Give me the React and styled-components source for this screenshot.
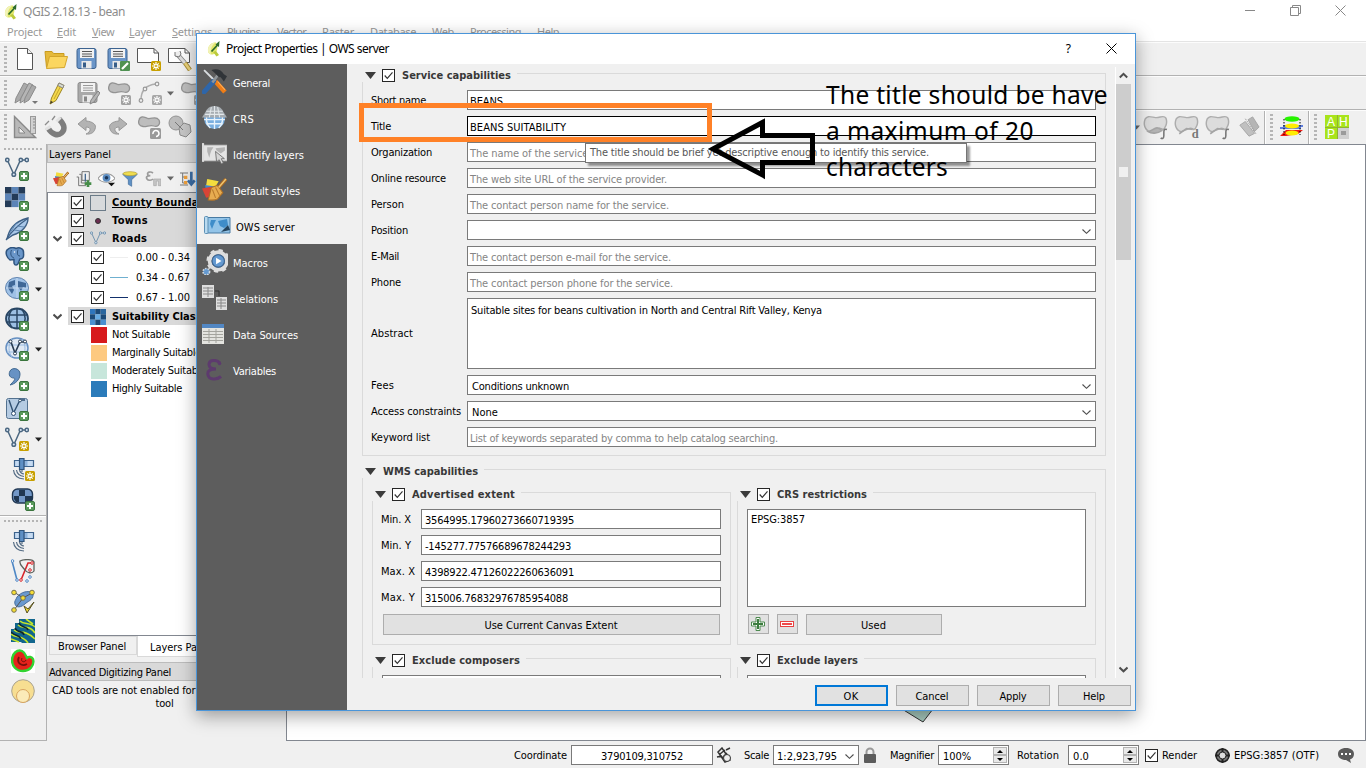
import React, { useLayoutEffect, useRef } from "react";
import styled, { createGlobalStyle } from "styled-components";

const UI = `"DejaVu Sans Condensed", "DejaVu Sans", sans-serif`;
const SEGOE = `"Noto Sans", "Open Sans", sans-serif`;

const Global = createGlobalStyle`
  *, *::before, *::after { box-sizing: border-box; }
  html, body { margin: 0; padding: 0; overflow: hidden; }
  body { font-family: ${UI}; font-stretch: condensed; font-size: 11px; line-height: 14px; color: #000; }
  svg { display: block; flex: none; }
`;

/* ---------- text ---------- */
const Span = styled.span`
  white-space: pre;
  display: inline-block;
  flex: none;
  justify-self: start;
`;

/* Spreads a label over the width given in w by letter spacing. */
function Label({ w, children, ...rest }) {
  const ref = useRef(null);
  useLayoutEffect(() => {
    const el = ref.current;
    if (!w || !el) return;
    el.style.letterSpacing = "0px";
    const natural = el.getBoundingClientRect().width;
    const count = el.textContent.length;
    el.style.letterSpacing = `${(w - natural) / count}px`;
  }, [w, children]);
  return <Span ref={ref} {...rest}>{children}</Span>;
}

/* ---------- frame ---------- */
const Screen = styled.div`
  position: relative;
  width: 1366px;
  height: 768px;
  overflow: hidden;
  background: #f0f0f0;
  display: flex;
  flex-direction: column;
`;
const TitleBar = styled.div`
  height: 23px;
  background: #fff;
  display: flex;
  align-items: center;
  padding-left: 3px;
  gap: 4px;
  color: #8c8c8c;
  font: 12px/16px ${SEGOE};
`;
const WindowButtons = styled.div`
  margin-left: auto;
  padding: 0 20px 2px 0;
  display: flex;
  gap: 34px;
  align-items: center;
`;
const MenuBar = styled.div`
  height: 19px;
  background: #fff;
  border-bottom: 1px solid #e4e4e4;
  display: flex;
  padding: 1px 0 0 7px;
  color: #989898;
  font: 11px/16px ${SEGOE};
`;
const MenuItem = styled.div`
  width: ${(p) => p.$slot}px;
  flex: none;
`;
const ToolRow = styled.div`
  height: ${(p) => p.$h || 34}px;
  flex: none;
  display: flex;
  align-items: center;
  border-bottom: ${(p) => (p.$last ? "0" : "1px solid #b2b2b2")};
  border-top: 1px solid #fcfcfc;
  padding-bottom: ${(p) => p.$pb || 0}px;
`;
const Handle = styled.div`
  width: 3px;
  height: 26px;
  margin: 0 ${(p) => p.$right || 8}px 0 4px;
  background: repeating-linear-gradient(to bottom, #b5b5b5 0 2px, transparent 2px 4px);
  flex: none;
`;
const ToolSlot = styled.div`
  width: ${(p) => p.$w || 31}px;
  height: 28px;
  flex: none;
  display: flex;
  align-items: center;
  justify-content: center;
`;
const Spacer = styled.div`flex: 1;`;
const ToolSplit = styled.div`
  width: 2px;
  height: 33px;
  border-left: 1px solid #b2b2b2;
  background: #fff;
`;

const Main = styled.div`
  height: 597px;
  flex: none;
  display: flex;
`;
const SideTools = styled.div`
  width: 47px;
  border-right: 1px solid #b2b2b2;
  border-bottom: 1px solid #b2b2b2;
  display: flex;
  flex-direction: column;
`;
const SideGrip = styled.div`
  width: 40px;
  height: 2px;
  margin: ${(p) => p.$m};
  flex: none;
  background: repeating-linear-gradient(to right, #b5b5b5 0 2px, transparent 2px 4px);
`;
const SideSlot = styled.div`
  height: 30px;
  flex: none;
  display: flex;
  align-items: center;
  padding-left: ${(p) => (p.$deep ? 11 : 5)}px;
  gap: 6px;
`;
const SideRule = styled.div`
  height: 2px;
  margin-top: 1px;
  flex: none;
  border-top: 1px solid #b2b2b2;
  background: #fff;
`;
const Dock = styled.div`
  width: 239px;
  display: flex;
  flex-direction: column;
`;
const DockTitle = styled.div`
  height: 19px;
  flex: none;
  border: 1px solid #bcbcbc;
  background: #d9d9d9;
  padding: 3px 0 0 1px;
`;
const DockTools = styled.div`
  height: 29px;
  flex: none;
  display: flex;
  align-items: center;
  padding: 2px 0 0 2px;
`;
const Tree = styled.div`
  height: 444px;
  width: 237px;
  flex: none;
  border: 1px solid #828790;
  background: #fff;
`;
const TreeRow = styled.div`
  height: ${(p) => p.$h || 18}px;
  display: flex;
  align-items: center;
  padding-top: 1px;
  background: ${(p) => (p.$head ? "linear-gradient(to right, #fff 20px, #d9d9d9 20px)" : "#fff")};
  font-weight: ${(p) => (p.$head ? "bold" : "normal")};
  text-decoration: ${(p) => (p.$line ? "underline" : "none")};
`;
const Expander = styled.div`
  width: ${(p) => p.$w || 23}px;
  flex: none;
  padding-left: 5px;
`;
const Symbol = styled.div`
  width: ${(p) => p.$w || 16}px;
  flex: none;
  margin: 0 ${(p) => p.$r || 6}px 0 6px;
  display: flex;
  justify-content: center;
`;
const Swatch = styled.div`
  width: 16px;
  height: 16px;
  background: ${(p) => p.$c};
  margin: 0 5px 0 43px;
`;
const Outline = styled.div`
  width: 16px;
  height: 16px;
  border: 1px solid #6b7b88;
  background: #d8dadc;
`;
const Stroke = styled.div`
  width: 18px;
  height: 1px;
  background: ${(p) => p.$c};
`;
const Tabs = styled.div`
  height: 26px;
  flex: none;
  display: flex;
  padding-left: 2px;
`;
const Tab = styled.div`
  width: ${(p) => p.$w}px;
  height: ${(p) => (p.$on ? 21 : 19)}px;
  border: 1px solid #d9d9d9;
  border-top-width: ${(p) => (p.$on ? 0 : 1)}px;
  background: ${(p) => (p.$on ? "#fff" : "#f0f0f0")};
  padding: ${(p) => (p.$on ? "5px 0 0 12px" : "3px 0 0 8px")};
`;
const CadText = styled.div`
  width: 235px;
  padding-top: 3px;
  line-height: 13px;
  display: flex;
  flex-direction: column;
  align-items: center;
`;
const Canvas = styled.div`
  flex: 1;
  background: #fff;
  border: 1px solid #828790;
  display: flex;
  align-items: flex-end;
  padding: 0 0 17px 615px;
`;

/* ---------- status bar ---------- */
const Status = styled.div`
  height: 27px;
  display: flex;
  align-items: center;
  padding: 1px 0 0 514px;
`;
const StatusLabel = styled(Label)`
  padding-top: 1px;
`;
const Gap = styled.div`
  width: ${(p) => p.$w}px;
  flex: none;
`;

/* ---------- controls ---------- */
const Field = styled.div`
  width: ${(p) => p.$w}px;
  height: ${(p) => p.$h || 20}px;
  flex: none;
  background: #fff;
  border: 1px solid ${(p) => (p.$focus ? "#000" : "#7a7a7a")};
  padding-top: ${(p) => p.$pt ?? 4}px;
  padding-left: ${(p) => p.$pl ?? 2}px;
  padding-right: ${(p) => (p.$combo ? 4 : 2)}px;
  color: ${(p) => (p.$hint ? "#858585" : "#000")};
  display: flex;
  align-items: flex-start;
  justify-content: ${(p) => (p.$center ? "center" : "flex-start")};
`;
const ComboArrow = styled.div`
  margin: 3px 0 0 auto;
`;
const CheckBox = styled.div`
  width: 13px;
  height: 13px;
  flex: none;
  border: 1px solid #262626;
  background: #fff;
`;
const Spin = styled.div`
  width: 71px;
  height: 20px;
  border: 1px solid #7a7a7a;
  background: #fff;
  display: flex;
  justify-content: space-between;
  padding: 1px 1px 1px 4px;
  line-height: 19px;
`;
const SpinKeys = styled.div`
  width: 14px;
  display: grid;
  grid-template-rows: 8px 8px;
`;
const SpinKey = styled.div`
  background: #e9e9e9;
  border: 1px solid #b4b4b4;
  display: grid;
  place-items: center;
`;
const Button = styled.div`
  width: ${(p) => p.$w}px;
  height: ${(p) => p.$h || 21}px;
  flex: none;
  background: #e1e1e1;
  border: ${(p) => (p.$primary ? "2px solid #0078d7" : "1px solid #adadad")};
  display: flex;
  align-items: center;
  justify-content: center;
  padding: ${(p) => (p.$icon ? 0 : 2)}px 1px 0 0;
`;

/* ---------- dialog ---------- */
const Dialog = styled.div`
  position: absolute;
  left: 196px;
  top: 33px;
  width: 940px;
  height: 678px;
  border: 1px solid #4a95d9;
  background: #f0f0f0;
  box-shadow: 0 5px 17px rgba(0, 0, 0, 0.36);
  display: flex;
  flex-direction: column;
`;
const DialogTitle = styled.div`
  height: 30px;
  flex: none;
  background: #fff;
  display: flex;
  align-items: center;
  padding: 0 18px 1px 9px;
  font: 12px/16px ${SEGOE};
  gap: 4px;
`;
const DialogBody = styled.div`
  flex: 1;
  display: flex;
  min-height: 0;
`;
const Pages = styled.div`
  width: 150px;
  background: #5d5d5d;
  color: #fff;
`;
const Page = styled.div`
  height: 36px;
  display: flex;
  align-items: center;
  padding: 3px 0 0 ${(p) => (p.$on ? 7 : 5)}px;
  gap: ${(p) => (p.$on ? 5 : 6)}px;
  color: ${(p) => (p.$on ? "#000" : "#fff")};
  background: ${(p) => (p.$on ? "#f0f0f0" : "transparent")};
`;
const PageIcon = styled.div`
  width: ${(p) => (p.$on ? 27 : 25)}px;
  margin-top: -4px;
`;
const Content = styled.div`
  flex: 1;
  display: flex;
  flex-direction: column;
`;
const ScrollArea = styled.div`
  height: 614px;
  display: flex;
  overflow: hidden;
`;
const Form = styled.div`
  width: 768px;
  padding: 5px 9px 0 15px;
`;
const ScrollBar = styled.div`
  width: 16px;
  margin-top: 3px;
  border-left: 1px solid #fff;
  display: flex;
  flex-direction: column;
  align-items: center;
`;
const ScrollEnd = styled.div`
  height: 17px;
  display: grid;
  place-items: center;
`;
const Thumb = styled.div`
  width: 15px;
  height: 176px;
  background: #cdcdcd;
  display: grid;
  place-items: center;
`;
const ThumbMark = styled.div`
  width: 9px;
  height: 10px;
  background: #f0f0f0;
`;
const Group = styled.section`
  width: ${(p) => p.$w}px;
  margin-top: ${(p) => p.$mt || 0}px;
`;
const GroupHead = styled.header`
  height: 13px;
  display: flex;
  align-items: center;
  padding-left: 3px;
  font-weight: bold;
  color: #383838;
`;
const HeadText = styled.div`
  padding-top: 1px;
`;
const Rule = styled.div`
  flex: 1;
  align-self: flex-end;
  height: 9px;
  margin-left: 6px;
  border: 1px solid #dadada;
  border-left: 0;
  border-bottom: 0;
`;
const GroupBody = styled.div`
  border: 1px solid #dadada;
  border-top: 0;
  height: ${(p) => p.$h}px;
  padding: ${(p) => p.$p || "8px 9px 0 8px"};
`;
const Columns = styled.div`
  display: grid;
  grid-template-columns: 359px 359px;
  column-gap: 6px;
`;
const FormRow = styled.div`
  display: grid;
  grid-template-columns: ${(p) => p.$c || 96}px auto;
  align-items: center;
  margin-bottom: 6px;
`;
const RowLabel = styled.div`
  padding-top: 1px;
`;
const ButtonRow = styled.div`
  display: flex;
  gap: 8px;
  padding-left: ${(p) => p.$pl}px;
  margin-top: 7px;
`;
const DialogButtons = styled.div`
  display: flex;
  justify-content: flex-end;
  gap: 8px;
  padding: 7px 4px 0 0;
`;

/* ---------- annotations ---------- */
const ToolTip = styled.div`
  position: absolute;
  left: 585px;
  top: 143px;
  width: 382px;
  height: 20px;
  padding: 2px 0 0 4px;
  background: #fff;
  border: 1px solid #767676;
  box-shadow: 3px 3px 2px rgba(0, 0, 0, 0.4);
  color: #575757;
`;
const Highlight = styled.div`
  position: absolute;
  left: 359px;
  top: 103px;
  width: 353px;
  height: 39px;
  border: 5px solid #ff8127;
`;
const Arrow = styled.svg`
  position: absolute;
  left: 705px;
  top: 115px;
`;
const Note = styled.div`
  position: absolute;
  left: 826px;
  top: 77px;
  display: flex;
  flex-direction: column;
  align-items: flex-start;
  font: 24.5px/36px ${SEGOE};
`;

/* ---------- small drawings ---------- */
const Tick = () => (
  <CheckBox><svg width="11" height="11"><path d="M1.7 5.5L4.3 8.3L9.5 2.4" fill="none" stroke="#333" strokeWidth="1.2" /></svg></CheckBox>
);
const Tri = () => <svg width="11" height="7"><path d="M0 0H11L5.5 7Z" fill="#3b3b3b" /></svg>;
const Down = ({ c = "#222" }) => <svg width="7" height="5"><path d="M0 .5H7L3.5 4.5Z" fill={c} /></svg>;
const Chevron = ({ up, bold }) => (
  <svg width="9" height="7"><path d={up ? "M.8 5.5L4.5 1.8L8.2 5.5" : "M.5 1.5L4.5 5.3L8.5 1.5"} fill="none" stroke="#4d4d4d" strokeWidth={bold ? 2 : 1.1} /></svg>
);
const Ico = ({ s = 24, children }) => <svg width={s} height={s} viewBox="0 0 24 24" fill="none">{children}</svg>;

const Plus = () => <g><rect x="14.5" y="14.5" width="9" height="9" rx="1.5" fill="#5b9a5d" stroke="#39743c" /><path d="M19 16V22M16 19H22" stroke="#fff" strokeWidth="2" /></g>;
const Star = ({ c = "#c8a000" }) => <g><rect x="14" y="14" width="10" height="10" rx="1.5" fill={c} /><path d="M19 15V23M15 19H23M16.3 16.3L21.7 21.7M21.7 16.3L16.3 21.7" stroke="#fff" strokeWidth="1.2" /><circle cx="19" cy="19" r="1" fill={c} /></g>;
const VLine = ({ c = "#4b6781" }) => (
  <g stroke={c} strokeWidth="1.5"><path d="M3 4.5L8.2 16M9.6 16L15 4M17.5 3H20" /><circle cx="2.3" cy="3" r="1.7" fill="#dce8f5" /><circle cx="8.8" cy="17.5" r="1.8" fill="#dce8f5" /><circle cx="15.8" cy="3" r="1.7" fill="#dce8f5" /><circle cx="21.8" cy="3" r="1.7" fill="#dce8f5" /></g>
);
const QLogo = () => (
  <svg width="16" height="16" viewBox="0 0 16 16" fill="none">
    <path d="M10 1.500C5 1 1.500 5.500 2 10C2.200 13 5 14.500 8 13C11 11.500 12 7 11 4Z" fill="#e0e66a" />
    <path d="M9.500 1.500C4.500 1.500 1.500 6 2 10C2.200 12 3.500 13 5 13.500C3.800 9.500 5.500 4.500 9.500 1.500Z" fill="#f2f3b8" />
    <path d="M7 11L10 10L13 14L10.500 15.500Z" fill="#bccb3c" />
    <path d="M5.500 10.500L12 3.500" stroke="#2b6b2c" strokeWidth="1.800" /><path d="M9.500 3.500L13.500 0L13 6Z" fill="#2b6b2c" />
  </svg>
);

/* toolbar drawings */
const PageNew = () => <Ico><path d="M4.500 1.500H14.500L19.500 6.500V22.500H4.500Z" fill="#fff" stroke="#555" /><path d="M14.500 1.500V6.500H19.500" stroke="#555" fill="#eee" /></Ico>;
const Folder = () => <Ico><path d="M2.500 20.500L1 4.500H8L9.500 6.500H20V10" fill="#e5b93a" stroke="#c99b1e" /><path d="M2.500 21.500L5.500 9.500H23.500L20.500 20.500Z" fill="#fbd660" stroke="#d3a52c" /></Ico>;
const Floppy = ({ gray, edit, pencil }) => (
  <Ico><rect x="2" y="1.500" width="19" height="20" rx="2" fill={gray ? "#a9a9a9" : "#6a95c8"} stroke={gray ? "#8b8b8b" : "#3c6390"} />
    <rect x="5" y="2" width="14" height="9" fill="#f2f2f2" /><path d="M7 4.500H17M7 7H17M7 9.300H17" stroke={gray ? "#999" : "#555"} strokeWidth="1" />
    <rect x="6.500" y="14" width="10" height="7.500" fill="#e9e9e9" /><rect x="8" y="15.500" width="3" height="5" fill={gray ? "#888" : "#365d89"} />
    {edit && <g><rect x="14" y="14" width="10" height="10" rx="1" fill="#4f9152" /><path d="M16 22L22 16" stroke="#fff" strokeWidth="2.200" /></g>}
    {pencil && <path d="M14 23L15 19L22 10L24 12L18 21Z" fill="#b5b5b5" stroke="#858585" />}
  </Ico>
);
const Composer = ({ tool }) => (
  <Ico><path d="M.5 1.500H17L21.500 6V15.500H.5Z" fill="#fff" stroke="#555" /><path d="M17 1.500V6H21.500" stroke="#555" />
    {tool ? <g><path d="M9 7L17 16" stroke="#888" strokeWidth="4.500" /><path d="M9 7L17 16" stroke="#ddd" strokeWidth="2.800" /><path d="M7 5V9L11 10L13 7L12 4" fill="#eee" stroke="#777" /><path d="M17 16L22 23" stroke="#a88c35" strokeWidth="4.500" /><path d="M17 16L22 23" stroke="#ead27a" strokeWidth="2.500" /></g> : <Star />}</Ico>
);
const Pencil = ({ gray, multi }) => (
  <Ico>{multi && <g stroke="#8b8b8b"><path d="M1 22L2 17L10 2L14 4L6 19Z" fill="#aaa" /><path d="M6 22L7 17L15 2L19 4L11 19Z" fill="#b5b5b5" /></g>}
    <path d={multi ? "M10 22L11 17L18 4L22 6L15 19Z" : "M5 23L6.500 17L14 2L19 4.500L11 19.500Z"} fill={gray ? "#aaa" : "#f4d94d"} stroke={gray ? "#8b8b8b" : "#9c8422"} />
    {!gray && <g><path d="M9 18L16.500 3.500" stroke="#c8a62a" /><path d="M14 2L19 4.500L17.700 7L12.800 4.500Z" fill="#d9dcd0" stroke="#888" /><path d="M5 23L6 20L8 21Z" fill="#333" /></g>}
    {multi && <path d="M18 20H24L21 23Z" fill="#777" />}</Ico>
);
const Blob = ({ badge = true, arrow }) => (
  <Ico><path d="M2 5C3 0 8 2 11 3.500C15 4 19 .5 22 5C24 10 20 12 17 11C13 9.500 10 12 6 11.500C2 11 1 8 2 5Z" fill="#bdbdbd" stroke="#939393" strokeWidth="1.300" />
    {badge && <Star c="#a2a2a2" />}{arrow && <g><rect x="13" y="13" width="11" height="11" rx="1.500" fill="#9a9a9a" /><path d="M16 19A3 3 0 1 1 19 21.500" stroke="#fff" strokeWidth="1.600" /></g>}</Ico>
);
const CurveNode = () => <Ico><path d="M3 19C3 10 8 4 18 3" stroke="#adadad" strokeWidth="1.500" /><g fill="#eee" stroke="#999" strokeWidth="1.200"><circle cx="3" cy="19.500" r="1.800" /><circle cx="7" cy="8" r="1.800" /><circle cx="19" cy="3" r="1.800" /></g><Star c="#a8a8a8" /></Ico>;
const SetSquare = () => <Ico><path d="M1.500 1.500V22.500H22.500Z" fill="#b8b8b8" stroke="#888" strokeWidth="1.400" /><path d="M6 12V18H12Z" fill="#f0f0f0" stroke="#888" /><rect x="17.500" y="1.500" width="5" height="17" fill="#d0d0d0" stroke="#999" /><path d="M20 4H22M20 7H22M20 10H22M20 13H22" stroke="#888" /></Ico>;
const Magnet = () => <Ico><path d="M4 13C8 20 14 21 17.500 18C22 14 20 9 15 4" stroke="#7d7d7d" strokeWidth="5.500" /><path d="M1.500 14.500L6.500 11.500M12.500 6.500L16.500 2.500" stroke="#e2e2e2" strokeWidth="3" /><path d="M1 10L5 6M8 5L11 1" stroke="#8d8d8d" strokeWidth="1.300" /></Ico>;
const Undo = ({ flip }) => <Ico><g transform={flip ? "translate(24 0) scale(-1 1)" : ""}><path d="M3 9L11 2.500V6C18 6.500 22 10 20 14C19 18 15 19.500 11 19C16 17 17 12 11 12V15.500Z" fill="#b3b3b3" stroke="#989898" /></g></Ico>;
const Simplify = () => <Ico><circle cx="8" cy="8" r="7" fill="#bcbcbc" stroke="#949494" /><path d="M11 13L16 8L22 10L23 17L18 22L12 20Z" fill="#c6c6c6" stroke="#8b8b8b" /><path d="M7 7L15 15" stroke="#777" /></Ico>;
const Scarf = ({ t, fill }) => (
  <Ico s={25}><path d="M2 4C4 0 8 2 12 2.500C16 3 20-.5 22 3C24 8 21 13 19 14C16 11 12 14 7 16C2 15 0 9 2 4Z" fill="#dcdcdc" stroke="#adadad" strokeWidth="1.400" /><path d={fill ? "M5 16C10 15 13 9 18 15C14 18 8 18 5 16Z" : "M5 18L12 13L18 14"} fill={fill ? "#b4b4b4" : "none"} stroke="#a5a5a5" strokeWidth="1.500" />
    {t ? <text x="17" y="22" fontFamily="Liberation Serif, serif" fontSize="12" fontWeight="bold" fill="#777">{t}</text> : <path d="M23 14C20 13 20 15 20 17V20C20 23 18 23 17 22" stroke="#777" strokeWidth="1.500" />}</Ico>
);
const Clips = () => <Ico s={22}><path d="M2 10L8 6L18 19L12 22Z" fill="#c0c0c0" stroke="#a3a3a3" /><path d="M11 4L16 1L23 12L18 17Z" fill="#b5b5b5" stroke="#a3a3a3" /><path d="M8 3L20 20" stroke="#999" strokeDasharray="2 1" /></Ico>;
const Stack = () => <Ico><path d="M3 11H23M0 13H21" stroke="#3159d8" strokeWidth="1.300" /><path d="M0 21L6 15H23L18 19L6 21Z" fill="#f21b13" /><ellipse cx="12" cy="18" rx="6.500" ry="2.500" fill="#ffec00" /><ellipse cx="12" cy="11" rx="7" ry="2.600" fill="#ffec00" /><ellipse cx="12" cy="4" rx="7.500" ry="2.700" fill="#27f400" /><path d="M4 4V20M20 4V20" stroke="#000" strokeDasharray="1.500 1.500" /></Ico>;
const Ahp = () => (
  <Ico><rect width="24" height="24" fill="#a8e41a" /><rect x="13" y="13" width="11" height="11" fill="#d0d0d0" /><path d="M12.500 0V24M0 12.500H24" stroke="#8fb431" /><rect x="16" y="16" width="5" height="4" fill="#9b9b9b" />
    <g fontFamily="Liberation Sans, sans-serif" fontSize="12" fill="#fff"><text x="2" y="10.500">A</text><text x="14" y="10.500">H</text><text x="2" y="22.500">P</text></g></Ico>
);

/* layer panel drawings */
const Brush = ({ s = 16 }) => <Ico s={s}><path d="M3 8L12 5L12 17L4 17Z" fill="#3e87cf" /><path d="M5 2L16 4L13 9L4 8Z" fill="#f4dd3e" /><path d="M0 11L10 9L11 18L4 20Z" fill="#d94436" /><path d="M9 10L15 8L20 15L15 21C12 23 9 22 6 22Z" fill="#e7ac50" stroke="#ad7026" /><path d="M16 10L23 2" stroke="#a76722" strokeWidth="3.500" /><path d="M16 10L23 2" stroke="#efc36e" strokeWidth="1.500" /><path d="M10 12L13 20M13 10L17 18" stroke="#b97a2c" /></Ico>;
const Copies = () => <Ico s={16}><path d="M1 9H4V22H15M5 5H8V18H19M9 1H20V14H9Z" stroke="#777" strokeWidth="1.500" /><path d="M14 4V16" stroke="#476a90" strokeWidth="2" /><path d="M18 14V24M13 19H23" stroke="#468d49" strokeWidth="4" /></Ico>;
const Eye = () => <Ico s={17}><path d="M0 12C6 3 18 3 24 12C18 19 6 19 0 12Z" fill="#fff" stroke="#999" strokeWidth="1.500" /><circle cx="12" cy="11" r="5.500" fill="#5b8cc1" /><circle cx="12" cy="11" r="2.500" fill="#1c3557" /><path d="M14 18H24L19 23Z" fill="#111" /></Ico>;
const Funnel = () => <Ico s={16}><path d="M1 5C4 2 20 2 23 5L14.500 13V23L9.500 20V13Z" fill="#5f91c5" stroke="#3a689a" /><ellipse cx="12" cy="4" rx="10.500" ry="3" fill="#efdc4e" stroke="#b7a02f" /></Ico>;
const EpsFilter = () => <Ico s={16}><path d="M12 3C8 0 3 2 4 5C4 7 8 7 8 7C3 7 1 9 3 12C5 15 10 14 12 12" stroke="#9b9b9b" strokeWidth="2.500" /><path d="M13 12H24V22H20V15H17V22H13Z" fill="#c6c6c6" stroke="#a5a5a5" /></Ico>;
const ExpandAll = () => <Ico s={16}><path d="M0 3H12M4 3V18H9M4 9H9M0 21H12" stroke="#777" strokeWidth="1.500" /><path d="M6 7H11V12H6ZM6 15H11V20H6Z" fill="#f0a03c" /><path d="M17 1V19M12 14L17 20L22 14" stroke="#3c6fa8" strokeWidth="4" /></Ico>;
const darkTiles = ["#243b57", "#5c84b7", "#243b57", "#5c84b7", "#243b57", "#5c84b7", "#243b57", "#5c84b7", "#7ba3d3"];
const lightTiles = ["#2f76bd", "#1c4a78", "#2a669e", "#1c4a78", "#65abe4", "#1c4a78", "#4a8fd0", "#1c4a78", "#4a8fd0"];
const Raster = ({ s = 24, badge, light }) => {
  const u = light ? 8 : 6.7;
  return (
    <Ico s={s}>{(light ? lightTiles : darkTiles).map((c, i) => <rect key={i} x={(i % 3) * u} y={Math.floor(i / 3) * u} width={u} height={u} fill={c} />)}{badge && <Plus />}</Ico>
  );
};

/* data source drawings */
const AddVector = () => <Ico><VLine /><Plus /></Ico>;
const Feather = () => <Ico><path d="M2 22C4 13 8 5 23 1C23 8 18 15 8 18Z" fill="#a9c7e8" stroke="#3d5f85" strokeWidth="1.400" /><path d="M1 23C6 15 13 8 22 2" stroke="#3d5f85" strokeWidth="1.200" /><path d="M5 16L12 5M9 13L16 14M12 9L19 10" stroke="#5f87b2" /><Plus /></Ico>;
const Elephant = () => <Ico><path d="M2 3C5 0 9 .5 11 1.500C14 0 19 1 18.500 6C19 10 18 12 15 12C13.500 14 14 18 11 18C8.500 18 9 15 9 12.500L5 13C2 11 0 6 2 3Z" fill="#6a96c9" stroke="#2f547f" strokeWidth="1.500" /><path d="M6.500 3C5 7 6 10 9 11M13 2.500C12 6 12 9 15 9" stroke="#2f547f" /><circle cx="9.500" cy="5" r=".8" fill="#fff" /><Plus /></Ico>;
const GlobeLand = () => <Ico><ellipse cx="12" cy="11" rx="11.500" ry="10.500" fill="#9fc1e6" stroke="#6285b0" /><path d="M4 5L10 3L10 8L7 9L9 13L7 17L3 11ZM13 4L21 6L21 11L18 10L16 14L13 10Z" fill="#3f6797" /><path d="M1 11H23M12 1V21" stroke="#cfe0f3" strokeWidth=".8" /><Plus /></Ico>;
const GlobeDark = () => <Ico><ellipse cx="12" cy="11.500" rx="11" ry="10" fill="#9cbfe3" stroke="#294664" strokeWidth="1.800" /><path d="M2 8H22M2 15H22M12 1.500V21.500M7 2C3 8 3 15 7 21M17 2C21 8 21 15 17 21" stroke="#294664" strokeWidth="1.500" /><Plus /></Ico>;
const GlobeV = () => <Ico><ellipse cx="12" cy="11" rx="11" ry="10" fill="#dfe9f4" stroke="#6690c2" strokeWidth="1.500" /><path d="M2 8H22M2 15H22M7 2C3 8 3 15 7 20M17 2C21 8 21 15 17 20" stroke="#9abbe0" /><path d="M6 5L10 16L15 5H20" stroke="#263a50" strokeWidth="1.600" /><g fill="#fff" stroke="#263a50"><circle cx="5.500" cy="4.500" r="1.500" /><circle cx="10" cy="16.500" r="1.500" /><circle cx="15" cy="4.500" r="1.500" /><circle cx="20" cy="4.500" r="1.500" /></g><Plus /></Ico>;
const Comma = () => <Ico><path d="M5 4C7 0 15 1 15 7C15 13 10 17 5 18C9 14 11 12 9 11C5 11 3 8 5 4Z" fill="#6792c4" stroke="#41688f" /><Plus /></Ico>;
const VBox = () => <Ico><rect x="1.500" y="1.500" width="21" height="20" rx="2" fill="#b5cbe2" stroke="#53718f" /><path d="M4 3L8.500 16L15 3H20" stroke="#2f4f70" strokeWidth="1.400" /><g fill="#fff" stroke="#2f4f70"><circle cx="8.500" cy="16.500" r="2" /><circle cx="15" cy="3.500" r="1.400" /></g><Plus /></Ico>;
const NewV = () => <Ico><VLine /><Star /></Ico>;
const Sat = ({ star }) => <Ico><path d="M3.500 3.500H9V9.500H3.500ZM13 3.500H22.500V9.500H13Z" fill="#c6dbf2" stroke="#3d638d" strokeWidth="1.200" /><path d="M15 4V9" stroke="#8fb4de" strokeWidth="3" /><path d="M8.500 1.500H13V12.500H8.500Z" fill="#5e8fc4" stroke="#2f547c" strokeWidth="1.200" /><path d="M11 13V15M2.500 13C3 19 7 21.500 13 22M5.500 13C6 17 9 19 13 19.500M8.500 13C9 15 10 16.500 13 17" stroke="#566d85" strokeWidth="1.200" />{star && <Star />}</Ico>;
const DbTile = () => <Ico><rect x="1.500" y="2" width="20" height="14" rx="5" fill="#7398c8" stroke="#203752" strokeWidth="1.400" /><path d="M8 3H14V9H8ZM3 9H8V15H5L3 12ZM14 9H21V13L18 15H14Z" fill="#203752" /><Plus /></Ico>;
const Topo = () => <Ico><path d="M1 2L6 21" stroke="#4e87c5" strokeWidth="1.600" /><path d="M10 21L17 4H22" stroke="#d9262b" strokeWidth="1.600" /><path d="M9 2C13 0 22 0 23 3V12C21 15 16 14 14 11C12 8 8 6 9 2Z" stroke="#5d625e" strokeWidth="1.300" /><g fill="#fff"><circle cx="1.500" cy="2" r="1.300" stroke="#4e87c5" /><circle cx="6" cy="21" r="1.300" stroke="#4e87c5" /><circle cx="16" cy="22" r="1.300" stroke="#4e87c5" /><circle cx="19" cy="18" r="1.300" stroke="#4e87c5" /><circle cx="10" cy="21" r="1.300" stroke="#d9262b" /><circle cx="19" cy="11" r="1.300" stroke="#d9262b" /><circle cx="21" cy="4" r="1.300" stroke="#d9262b" /></g></Ico>;
const CheckGeom = () => <Ico><path d="M6 8C10 3 17 1 22 4C23 10 18 12 15 14C10 19 5 19 4 15C3 12 5 11 6 8Z" fill="#6a99cf" stroke="#496f9d" /><path d="M3 3L12 9L3 21M12 9L21 4" stroke="#555" /><g fill="#f5dd35" stroke="#77724c"><circle cx="3" cy="3.500" r="2.300" /><circle cx="21" cy="3.500" r="2.300" /><circle cx="12" cy="9" r="2.300" /><circle cx="3" cy="21" r="2.300" /></g><path d="M13 17L17 20L23 13L16 24Z" fill="#f5dd35" stroke="#554f21" /></Ico>;
const Terrain = () => <Ico><path d="M8 0H24V24H10L11 23H0V10H4V4H8Z" fill="#12668d" /><path d="M9 2C13 6 19 3 24 8M7 6C12 11 18 5 24 14M3 11C8 16 13 9 24 20M0 15C5 20 11 15 17 24M0 20L8 23M15 0L22 5" stroke="#c5e52a" strokeWidth="1.600" /><path d="M8 4C10 9 16 7 17 11M4 9C7 15 12 11 13 16M0 13C5 18 8 15 10 20" stroke="#0e2630" strokeWidth="1.600" /></Ico>;
const Heat = () => <Ico><rect width="24" height="24" fill="#fff" /><path d="M11 2C15 4 15 8 16 9C18 7 21 8 22 10C24 17 18 22 12 22C5 22 1 17 1 11C1 5 6 0 11 2Z" fill="#e5231b" stroke="#31d431" strokeWidth="2.400" /><path d="M8 8C5 14 11 18 16 15" stroke="#75100c" strokeWidth="1.800" /><path d="M11 9C9 13 14 14 15 11" stroke="#75100c" /></Ico>;
const Rings = () => <Ico><circle cx="12" cy="12" r="11.300" fill="#f7de91" stroke="#a8a392" /><circle cx="12" cy="17" r="6.500" fill="#fbebb8" stroke="#d9a45e" /></Ico>;

/* dialog page drawings */
const Tools = () => <Ico s={25}><path d="M2 1L13 12" stroke="#d9dde0" strokeWidth="1.800" /><path d="M13 12L22 22" stroke="#ef7d16" strokeWidth="4.400" /><path d="M15 12L22 20" stroke="#ffae58" /><path d="M2 22L11 12" stroke="#2e66aa" strokeWidth="4.800" strokeLinecap="round" /><path d="M10 13L15 6" stroke="#8f9599" strokeWidth="2.500" /><path d="M9 1C14-1 19 1 21 5L24 7L21 12L18 8C15 8 15 6 9 1Z" fill="#303438" /></Ico>;
const CrsGlobe = () => <Ico s={25}><circle cx="12" cy="13" r="10" fill="#7aafe0" /><path d="M2 14H22M12 4V23M6 5C3 12 4 19 8 22M18 5C21 12 20 19 16 22M4 18H20" stroke="#e8f3fc" strokeWidth="1.300" /><path d="M0 12L5 4C8 0 16 0 19 4L24 12Z" fill="#a6acb1" /><path d="M3 9H21M4 6H20M9 2L7 12M15 2L17 12M12 1V12" stroke="#e3e8eb" /></Ico>;
const IdMap = () => <Ico s={25}><path d="M1 4H24V19H1Z" fill="#e4e4e4" stroke="#c5c5c5" /><path d="M1 2V20" stroke="#ddd" strokeWidth="2" /><path d="M5 6L11 6L9 9L8 12L7 16L5 10ZM13 7L22 6L22 9L18 12L14 9Z" fill="#b4b4b4" /><path d="M13 10L14 20L16.500 18L18.500 22L20.500 21L18.500 17H21.500Z" fill="#d6d6d6" stroke="#666" strokeWidth=".8" /></Ico>;
const OwsMap = () => <svg width="27" height="19" fill="none"><path d="M1 1.500H26V17H2Z" fill="#93c4e8" stroke="#487ba3" /><rect x=".5" y=".5" width="3.500" height="17" rx="1" fill="#b9daf0" stroke="#5d90b5" /><path d="M7 4L12 4L10 8L8 13L6 8ZM14 5L23 3L24 9L20 12L16 10Z" fill="#3f8dc9" /><path d="M24 9L26 14L17 16Z" fill="#24445e" /></svg>;
const Gears = () => <Ico s={26}><circle cx="15" cy="11" r="8" stroke="#dedede" strokeWidth="3.500" /><circle cx="15" cy="11" r="9.700" stroke="#dedede" strokeWidth="2.500" strokeDasharray="3.800 3.820" /><circle cx="15" cy="11" r="5.700" fill="#6499d0" stroke="#3c6898" /><path d="M13 8L18 11L13 14Z" fill="#fff" /><circle cx="4" cy="21" r="3" fill="#6499d0" stroke="#d2d7db" strokeWidth="1.500" strokeDasharray="1.500 1" /></Ico>;
const Relation = () => <svg width="26" height="26"><g fill="#dedede"><rect width="12" height="13" /><rect x="14" y="12" width="11" height="13" /></g><path d="M1 3H11M1 6H11M1 9H11M6 2V12M15 15H24M15 18H24M15 21H24M19 13V24" stroke="#888" fill="none" /><path d="M13 6H17V11" stroke="#333" fill="none" /></svg>;
const Table = () => <svg width="23" height="20"><rect width="22" height="20" fill="#e4e4e0" /><rect width="22" height="4" fill="#5287c3" /><path d="M1 7.500H21M1 10.500H21M1 13.500H21M1 16.500H21M7 5V19M14 5V19" stroke="#a4a49e" fill="none" /></svg>;
const Epsilon = () => <svg width="25" height="22" fill="none"><path d="M18 4C14 0 7 1 7 5.500C7 9 11 10 14 10C8 10 5 12 6 16C7 21 15 21 19 17.500" stroke="#5d3a6e" strokeWidth="3" /><circle cx="17.500" cy="4.500" r="1.800" fill="#5d3a6e" /></svg>;

const leftIcons = [[AddVector], [() => <Raster badge />], [Feather], [Elephant, 1], [GlobeLand, 1], [GlobeDark], [GlobeV, 1], [Comma], [VBox], [NewV, 1], [() => <Sat star />, 0, 1], [DbTile, 0, 1]];
const lowerIcons = [Sat, Topo, CheckGeom, Terrain, Heat, Rings];
const menus = [["Project", 35, 50, 3], ["Edit", 19, 35, 0], ["View", 22, 37, 0], ["Layer", 27, 43, 0], ["Settings", 40, 55, 0], ["Plugins", 33, 50, 0], ["Vector", 29, 45, 4], ["Raster", 32, 48, 0], ["Database", 46, 62, 0], ["Web", 22, 38, 0], ["Processing", 51, 67, 3], ["Help", 22, 22, 0]];
const pages = [["General", 37, Tools], ["CRS", 21, CrsGlobe], ["Identify layers", 71, IdMap], ["Default styles", 67, () => <Brush s={25} />], ["OWS server", 59, OwsMap], ["Macros", 35, Gears], ["Relations", 45, Relation], ["Data Sources", 65, Table], ["Variables", 43, Epsilon]];
const serviceRows = [
  ["Short name", 55, "BEANS", 33], ["Title", 20, "BEANS SUITABILITY", 96, "focus"],
  ["Organization", 61, "The name of the service provider.", 164, "hint"],
  ["Online resource", 75, "The web site URL of the service provider.", 197, "hint"],
  ["Person", 33, "The contact person name for the service.", 199, "hint"],
  ["Position", 37, "", 0, "combo"],
  ["E-Mail", 28, "The contact person e-mail for the service.", 201, "hint"],
  ["Phone", 30, "The contact person phone for the service.", 203, "hint"],
  ["Abstract", 42, "Suitable sites for beans cultivation in North and Central Rift Valley, Kenya", 351, "area"],
  ["Fees", 23, "Conditions unknown", 97, "combo"],
  ["Access constraints", 90, "None", 26, "combo"],
  ["Keyword list", 59, "List of keywords separated by comma to help catalog searching.", 308, "hint"],
];
const extent = [["Min. X", 30, "3564995.17960273660719395", 149], ["Min. Y", 30, "-145277.77576689678244293", 146], ["Max. X", 34, "4398922.47126022260636091", 149], ["Max. Y", 34, "315006.76832976785954088", 143]];

function Head({ title, w, check = true }) {
  return (
    <GroupHead>
      <Tri /><Gap $w={check ? 6 : 7} />{check && <Tick />}{check && <Gap $w={7} />}
      <HeadText><Label w={w}>{title}</Label></HeadText><Rule />
    </GroupHead>
  );
}
const SpinBox = ({ text, w }) => (
  <Spin><Label w={w}>{text}</Label><SpinKeys><SpinKey><svg width="6" height="3"><path d="M0 3H6L3 0Z" /></svg></SpinKey><SpinKey><svg width="6" height="3"><path d="M0 0H6L3 3Z" /></svg></SpinKey></SpinKeys></Spin>
);

function PropertiesDialog() {
  return (
    <Dialog>
      <DialogTitle>
        <QLogo /><Label w={163}>Project Properties | OWS server</Label><Spacer />
        <Label>?</Label><Gap $w={27} />
        <svg width="11" height="11"><path d="M.5 .5L10.500 10.500M10.500 .5L.5 10.500" stroke="#000" /></svg>
      </DialogTitle>
      <DialogBody>
        <Pages>
          {pages.map(([name, w, Icon]) => {
            const on = name === "OWS server";
            return <Page key={name} $on={on}><PageIcon $on={on}><Icon /></PageIcon><Label w={w}>{name}</Label></Page>;
          })}
        </Pages>
        <Content>
          <ScrollArea>
            <Form>
              <Group $w={744}>
                <Head title="Service capabilities" w={109} />
                <GroupBody $h={374}>
                  {serviceRows.map(([name, w, value, vw, kind]) => (
                    <FormRow key={name}>
                      <RowLabel><Label w={w}>{name}</Label></RowLabel>
                      <Field $w={629} $h={kind === "area" ? 71 : 0} $pt={kind === "area" ? 5 : 4} $pl={kind === "combo" ? 4 : kind === "area" ? 3 : 2} $focus={kind === "focus"} $hint={kind === "hint"} $combo={kind === "combo"}>
                        {value && <Label w={vw}>{value}</Label>}{kind === "combo" && <ComboArrow><Chevron /></ComboArrow>}
                      </Field>
                    </FormRow>
                  ))}
                </GroupBody>
              </Group>
              <Group $w={744} $mt={9}>
                <Head title="WMS capabilities" w={95} check={false} />
                <GroupBody $h={210} $p="10px 9px 0 9px">
                  <Columns>
                    <Group $w={359}>
                      <Head title="Advertised extent" w={103} />
                      <GroupBody $h={144}>
                        {extent.map(([n, w, v, vw]) => <FormRow key={n} $c={40}><RowLabel><Label w={w}>{n}</Label></RowLabel><Field $w={300} $pl={3}><Label w={vw}>{v}</Label></Field></FormRow>)}
                        <ButtonRow $pl={2}><Button $w={337}><Label w={133}>Use Current Canvas Extent</Label></Button></ButtonRow>
                      </GroupBody>
                    </Group>
                    <Group $w={359}>
                      <Head title="CRS restrictions" w={90} />
                      <GroupBody $h={144} $p="8px 9px 0 9px">
                        <Field $w={339} $h={98} $pt={3} $pl={3}><Label w={54}>EPSG:3857</Label></Field>
                        <ButtonRow $pl={1}>
                          <Button $icon $w={21} $h={20}><svg width="14" height="14"><path d="M5 .5H9V5H13.500V9H9V13.500H5V9H.5V5H5Z" fill="#fff" stroke="#4c8a4f" /><path d="M7 2V12M2 7H12" stroke="#3c7d3f" strokeWidth="2" /></svg></Button>
                          <Button $icon $w={21} $h={20}><svg width="14" height="6"><rect x=".5" y=".5" width="13" height="5" fill="#fff" stroke="#e84242" /><path d="M2 3H12" stroke="#ef4b4b" strokeWidth="2" /></svg></Button>
                          <Button $w={136}><Label w={25}>Used</Label></Button>
                        </ButtonRow>
                      </GroupBody>
                    </Group>
                    <Group $w={359} $mt={9}><Head title="Exclude composers" w={108} /><GroupBody $h={40} $p="8px 9px 0 9px"><Field $w={339} $h={30} /></GroupBody></Group>
                    <Group $w={359} $mt={9}><Head title="Exclude layers" w={81} /><GroupBody $h={40} $p="8px 9px 0 9px"><Field $w={339} $h={30} /></GroupBody></Group>
                  </Columns>
                </GroupBody>
              </Group>
            </Form>
            <ScrollBar>
              <ScrollEnd><Chevron up bold /></ScrollEnd>
              <Thumb><ThumbMark /></Thumb><Spacer />
              <ScrollEnd><Chevron bold /></ScrollEnd>
            </ScrollBar>
          </ScrollArea>
          <DialogButtons>
            <Button $w={73} $primary><Label w={15}>OK</Label></Button>
            <Button $w={73}><Label w={33}>Cancel</Label></Button>
            <Button $w={73}><Label w={27}>Apply</Label></Button>
            <Button $w={73}><Label w={22}>Help</Label></Button>
          </DialogButtons>
        </Content>
      </DialogBody>
    </Dialog>
  );
}

function LayersDock() {
  return (
    <Dock>
      <DockTitle><Label w={62}>Layers Panel</Label></DockTitle>
      <DockTools>
        {[Brush, Copies, Eye, Funnel, EpsFilter].map((I, i) => <ToolSlot key={i} $w={23}><I /></ToolSlot>)}
        <ToolSlot $w={12}><Down c="#666" /></ToolSlot><ToolSlot $w={24}><ExpandAll /></ToolSlot>
      </DockTools>
      <Tree>
        <TreeRow $head $line><Expander /><Tick /><Symbol><Outline /></Symbol><Label w={108}>County Boundaries</Label></TreeRow>
        <TreeRow $head><Expander /><Tick /><Symbol><svg width="6" height="6"><circle cx="3" cy="3" r="2.500" fill="#6b2d50" stroke="#333" /></svg></Symbol><Label w={36}>Towns</Label></TreeRow>
        <TreeRow $head><Expander><Chevron bold /></Expander><Tick /><Symbol><Ico s={16}><VLine c="#7495b0" /></Ico></Symbol><Label w={35}>Roads</Label></TreeRow>
        {[["0.00 - 0.34", "#eeeeee"], ["0.34 - 0.67", "#6fb0d0"], ["0.67 - 1.00", "#12306b"]].map(([t, c]) => (
          <TreeRow key={t} $h={20}><Expander $w={43} /><Tick /><Symbol $w={18} $r={8}><Stroke $c={c} /></Symbol><Label w={54}>{t}</Label></TreeRow>
        ))}
        <TreeRow $head><Expander><Chevron bold /></Expander><Tick /><Symbol><Raster s={16} light /></Symbol><Label w={102}>Suitability Classes</Label></TreeRow>
        {[["Not Suitable", "#d7191c", 58], ["Marginally Suitable", "#fdc980", 89], ["Moderately Suitable", "#c7e6db", 94], ["Highly Suitable", "#2b7bba", 70]].map(([t, c, w]) => (
          <TreeRow key={t}><Swatch $c={c} /><Label w={w}>{t}</Label></TreeRow>
        ))}
      </Tree>
      <Tabs><Tab $w={88}><Label w={68}>Browser Panel</Label></Tab><Tab $w={88} $on><Label w={62}>Layers Panel</Label></Tab></Tabs>
      <DockTitle><Label w={122}>Advanced Digitizing Panel</Label></DockTitle>
      <CadText><Label w={225}>CAD tools are not enabled for the current map</Label><Label w={18}>tool</Label></CadText>
    </Dock>
  );
}

export default function App() {
  return (
    <>
      <Global />
      <Screen>
        <TitleBar>
          <QLogo /><Label w={102}>QGIS 2.18.13 - bean</Label>
          <WindowButtons>
            <svg width="11" height="11"><path d="M0 5.500H10" stroke="#888" /></svg>
            <svg width="11" height="11" fill="none"><path d="M.5 2.500H8.500V10.500H.5ZM2.500 2.500V.5H10.500V8.500H8.500" stroke="#888" /></svg>
            <svg width="11" height="11"><path d="M.5 .5L10.500 10.500M10.500 .5L.5 10.500" stroke="#888" /></svg>
          </WindowButtons>
        </TitleBar>
        <MenuBar>
          {menus.map(([t, w, slot, k]) => <MenuItem key={t} $slot={slot}><Label w={w}>{t.slice(0, k)}<u>{t[k]}</u>{t.slice(k + 1)}</Label></MenuItem>)}
        </MenuBar>
        <ToolRow>
          <Handle $right={2} />
          {[PageNew, Folder, Floppy, () => <Floppy edit />, Composer, () => <Composer tool />].map((I, i) => <ToolSlot key={i}><I /></ToolSlot>)}
        </ToolRow>
        <ToolRow>
          <Handle $right={3} />
          {[() => <Pencil gray multi />, Pencil, () => <Floppy gray pencil />, Blob, CurveNode].map((I, i) => <ToolSlot key={i}><I /></ToolSlot>)}
          <ToolSlot $w={11}><Down c="#666" /></ToolSlot><ToolSlot><Blob /></ToolSlot>
        </ToolRow>
        <ToolRow $last $pb={1}>
          <Handle $right={2} />
          {[SetSquare, Magnet, Undo, () => <Undo flip />, () => <Blob badge={false} arrow />, Simplify].map((I, i) => <ToolSlot key={i}><I /></ToolSlot>)}
          <Spacer />
          <Down c="#666" />
          {[() => <Scarf fill />, () => <Scarf t="d" />, Scarf, Clips].map((I, i) => <ToolSlot key={i}><I /></ToolSlot>)}
          <ToolSplit /><Handle $right={2} /><ToolSlot $w={33}><Stack /></ToolSlot>
          <ToolSplit /><Handle $right={3} /><ToolSlot $w={34}><Ahp /></ToolSlot><Gap $w={12} />
        </ToolRow>
        <Main>
          <SideTools>
            <SideGrip $m="4px 0 4px 4px" />
            {leftIcons.map(([I, menu, deep], i) => <SideSlot key={i} $deep={deep}><I />{menu ? <Down /> : null}</SideSlot>)}
            <SideRule />
            <SideGrip $m="3px 0 4px 4px" />
            {lowerIcons.map((I, i) => <SideSlot key={i} $deep><I /></SideSlot>)}
          </SideTools>
          <LayersDock />
          <Canvas><svg width="32" height="14"><path d="M0 0L21 13L31 0Z" fill="#a9ccc1" stroke="#333" /></svg></Canvas>
        </Main>
        <Status>
          <StatusLabel w={53}>Coordinate</StatusLabel><Gap $w={4} />
          <Field $w={142} $center><Label w={82}>3790109,310752</Label></Field><Gap $w={3} />
          <svg width="16" height="16" fill="none"><path d="M2 5L6 1L14 13L9 15ZM4 7L9 3M6 11L11 6M8 14L13 9M1 10L6 9M10 3L14 1" stroke="#333" strokeWidth="1.500" /><circle cx="11" cy="11" r="3.500" fill="#eee" stroke="#333" /></svg>
          <Gap $w={12} /><StatusLabel w={25}>Scale</StatusLabel><Gap $w={4} />
          <Field $w={86} $combo $pl={3}><Label w={60}>1:2,923,795</Label><ComboArrow><Chevron /></ComboArrow></Field><Gap $w={5} />
          <svg width="12" height="16"><path d="M2.500 8V5A3.500 3.500 0 0 1 9.500 5V8" fill="none" stroke="#999" strokeWidth="2" /><rect y="7" width="12" height="9" rx="1" fill="#5c5c5c" /></svg>
          <Gap $w={14} /><StatusLabel w={44}>Magnifier</StatusLabel><Gap $w={4} /><SpinBox text="100%" w={28} />
          <Gap $w={8} /><StatusLabel w={42}>Rotation</StatusLabel><Gap $w={9} /><SpinBox text="0.0" w={16} />
          <Gap $w={6} /><Tick /><Gap $w={4} /><StatusLabel w={35}>Render</StatusLabel><Gap $w={18} />
          <svg width="15" height="15" fill="none"><circle cx="7.500" cy="7.500" r="6.500" fill="#777" stroke="#222" strokeWidth="1.500" /><circle cx="7.500" cy="7.500" r="3.500" fill="#ddd" stroke="#222" /><path d="M7.500 0V4M7.500 11V15M0 7.500H4M11 7.500H15" stroke="#222" strokeWidth="2" /></svg>
          <Gap $w={4} /><StatusLabel w={85}>EPSG:3857 (OTF)</StatusLabel><Gap $w={19} />
          <svg width="17" height="15"><path d="M8 0C13 0 16 2.500 16 6C16 9 14 11 12 11.500L13 15L8 12C3 12 0 9.500 0 6C0 2.500 3 0 8 0Z" fill="#5b5b5b" /><path d="M3 5H5V7H3ZM7 5H9V7H7ZM11 5H13V7H11Z" fill="#fff" /></svg>
        </Status>
        <PropertiesDialog />
        <ToolTip><Label w={339}>The title should be brief yet descriptive enough to identify this service.</Label></ToolTip>
        <Highlight />
        <Arrow width="115" height="70" fill="none"><path d="M8 34L57.500 7.500V20.500H107.500V47.500H57.500V60Z" stroke="#000" strokeWidth="5" /></Arrow>
        <Note><Label w={282}>The title should be have</Label><Label w={208}>a maximum of 20</Label><Label w={122}>characters</Label></Note>
      </Screen>
    </>
  );
}
